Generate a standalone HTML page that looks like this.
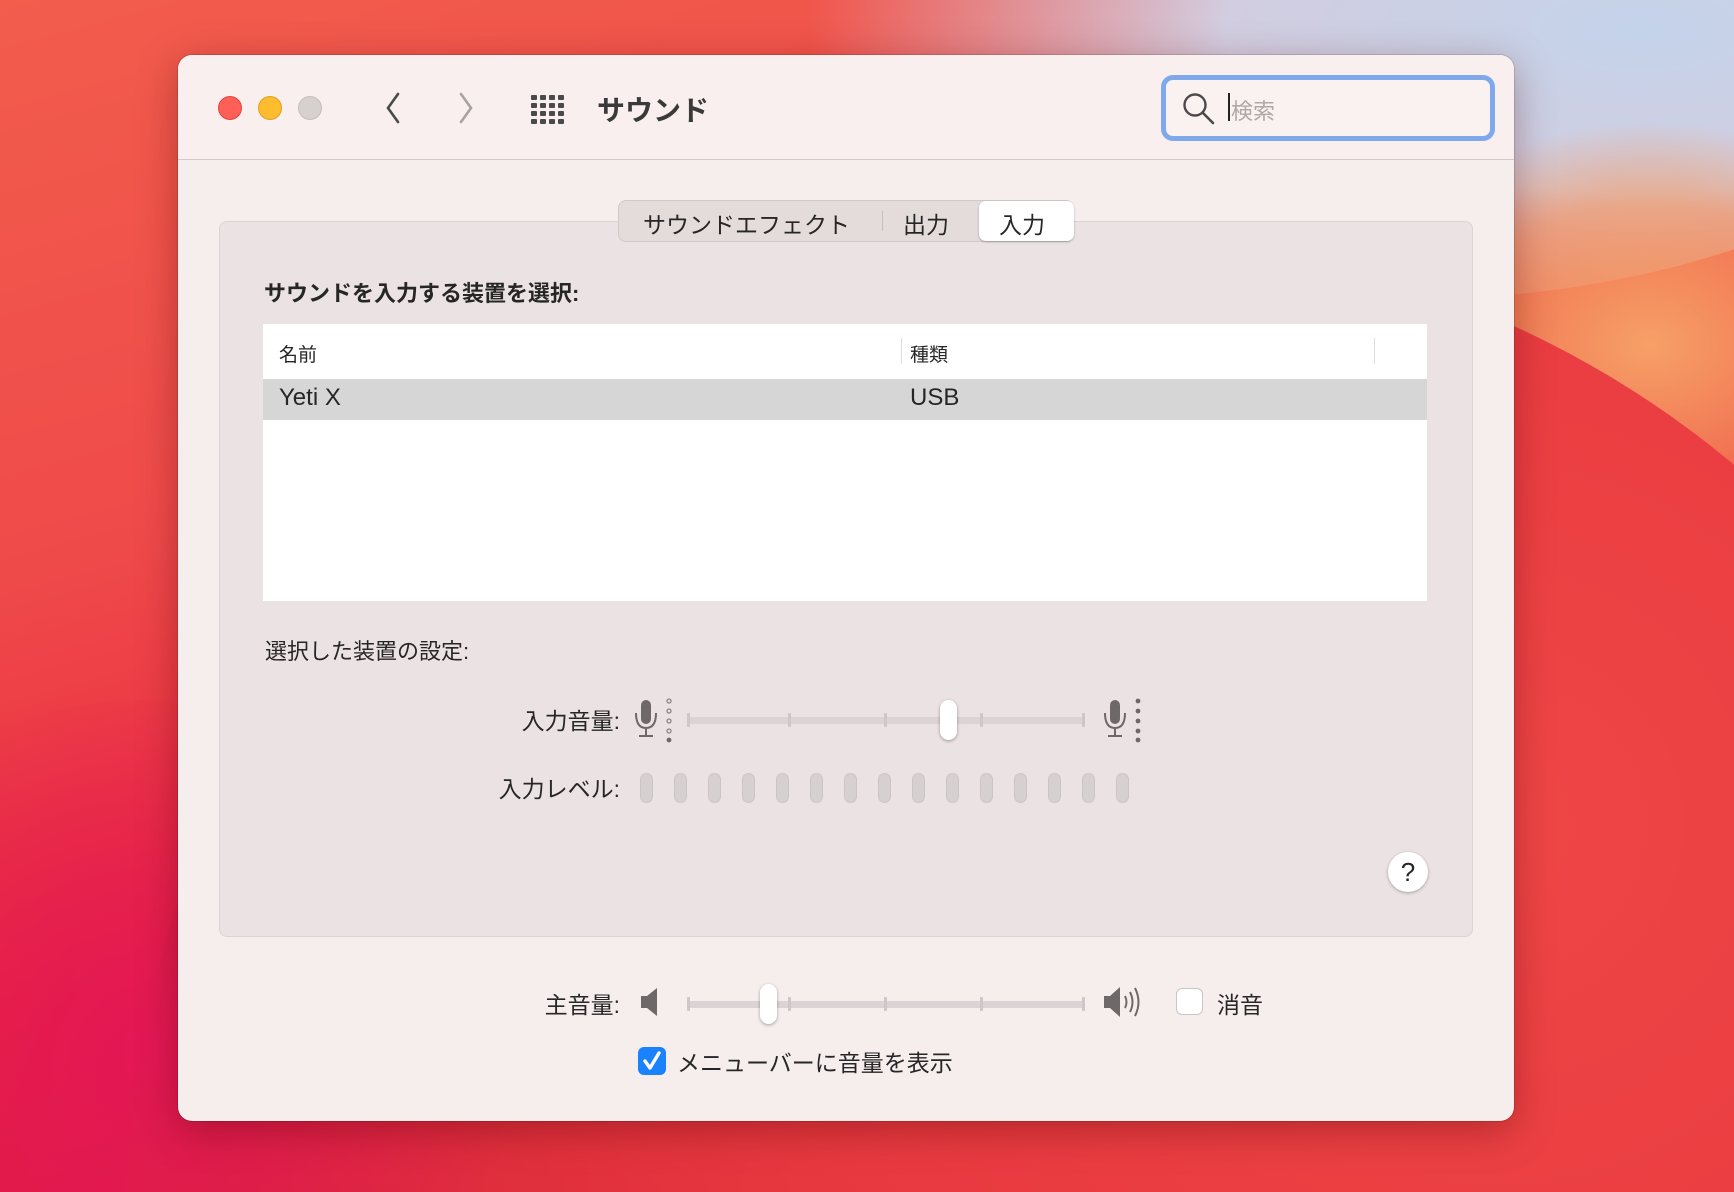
<!DOCTYPE html>
<html><head><meta charset="utf-8">
<style>
*{margin:0;padding:0;box-sizing:border-box}
html,body{width:1734px;height:1192px;overflow:hidden;background:#e8303f}
body{position:relative;font-family:"Liberation Sans","Noto Sans CJK JP",sans-serif;color:#262626}
.wall{position:absolute;left:0;top:0;width:1734px;height:1192px;overflow:hidden;
background:linear-gradient(165deg,#f25d4c 0%,#ef4a4a 35%,#e8243e 62%,#d7124a 85%,#c0183a 100%)}
.sky{position:absolute;left:800px;top:-300px;width:1200px;height:600px;border-radius:50%;background:radial-gradient(ellipse at 70% 55%,#c4d3ea 0%,#d2cde0 35%,rgba(235,170,170,0) 70%)}
.peach{position:absolute;left:1350px;top:120px;width:600px;height:450px;border-radius:50%;background:radial-gradient(ellipse,#f6a067 0%,rgba(245,150,90,0.6) 45%,rgba(245,150,90,0) 70%)}
.wave{position:absolute;left:126px;top:237px;width:1960px;height:1960px;border-radius:50%;background:radial-gradient(circle at 70% 30%,#ef4646 0%,#e7383f 40%,#d8253a 70%)}
.pink{position:absolute;left:-250px;top:700px;width:800px;height:700px;border-radius:50%;background:radial-gradient(circle,#e31755 0%,rgba(220,20,80,0) 70%)}
.win{position:absolute;left:178px;top:55px;width:1336px;height:1066px;background:#f6eeed;border-radius:14px;box-shadow:0 10px 40px rgba(80,0,0,.35),0 0 0 1px rgba(0,0,0,.12);overflow:hidden}
.tb{position:absolute;left:0;top:0;width:100%;height:105px;border-bottom:1px solid #d4c9c8;background:#f8efee}
.tl{position:absolute;top:41px;width:24px;height:24px;border-radius:50%}
.abs{position:absolute}
.panel{position:absolute;left:41px;top:166px;width:1254px;height:716px;background:#ebe3e3;border:1px solid #ddd3d3;border-radius:8px}
.seg{position:absolute;left:440px;top:145px;width:456px;height:42px;background:#e4dbdb;border:1px solid #d2c8c8;border-radius:8px;font-size:23px}
.seg span{position:absolute;top:5px}
.sel{position:absolute;left:360px;top:0px;width:95px;height:40px;background:#fff;border-radius:7px;box-shadow:0 1px 2px rgba(0,0,0,.25)}
.table{position:absolute;left:85px;top:269px;width:1164px;height:277px;background:#fff}
.lbl{position:absolute;font-size:23px;text-align:right}
.track{position:absolute;height:7px;background:#dcd4d4;border-radius:4px}
.tick{position:absolute;width:3px;height:14px;background:#cfc7c7;border-radius:1px}
.thumb{position:absolute;width:17px;height:40px;background:#fff;border-radius:9px;box-shadow:0 1px 3px rgba(0,0,0,.35)}
.bar{position:absolute;width:13px;height:30px;background:#d7d0d0;border:1px solid #cdc5c5;border-radius:7px}
</style></head><body>
<div class="wall"><div class="sky"></div><div class="peach"></div><div class="wave"></div><div class="pink"></div></div>
<div class="win">
 <div class="tb">
  <div class="tl" style="left:40px;background:#fe5f57;border:1px solid #e0443e"></div>
  <div class="tl" style="left:80px;background:#febc2e;border:1px solid #dea123"></div>
  <div class="tl" style="left:120px;background:#d6d0cf;border:1px solid #c4bdbc"></div>
  <svg class="abs" style="left:205px;top:36px" width="20" height="34"><path d="M15 3 L5 17 L15 31" fill="none" stroke="#4a4a4a" stroke-width="2.6" stroke-linecap="round"/></svg>
  <svg class="abs" style="left:278px;top:36px" width="20" height="34"><path d="M5 3 L15 17 L5 31" fill="none" stroke="#a8a2a2" stroke-width="2.6" stroke-linecap="round"/></svg>
  <svg class="abs" style="left:352px;top:39px" width="38" height="30"><g fill="#4a4a4a">
   <rect x="1" y="1" width="6" height="5" rx="1"/><rect x="10" y="1" width="6" height="5" rx="1"/><rect x="19" y="1" width="6" height="5" rx="1"/><rect x="28" y="1" width="6" height="5" rx="1"/>
   <rect x="1" y="9" width="6" height="5" rx="1"/><rect x="10" y="9" width="6" height="5" rx="1"/><rect x="19" y="9" width="6" height="5" rx="1"/><rect x="28" y="9" width="6" height="5" rx="1"/>
   <rect x="1" y="17" width="6" height="5" rx="1"/><rect x="10" y="17" width="6" height="5" rx="1"/><rect x="19" y="17" width="6" height="5" rx="1"/><rect x="28" y="17" width="6" height="5" rx="1"/>
   <rect x="1" y="25" width="6" height="5" rx="1"/><rect x="10" y="25" width="6" height="5" rx="1"/><rect x="19" y="25" width="6" height="5" rx="1"/><rect x="28" y="25" width="6" height="5" rx="1"/></g></svg>
  <div class="abs" style="left:419px;top:34px;font-size:28px;font-weight:bold;color:#3a3a3a">サウンド</div>
  <div class="abs" style="left:983px;top:20px;width:334px;height:66px;border:5px solid #7fa9ea;border-radius:12px;background:#f9f2f1"></div>
  <svg class="abs" style="left:1004px;top:37px" width="34" height="34"><circle cx="13" cy="13" r="10.5" fill="none" stroke="#4a4a4a" stroke-width="2.4"/><path d="M21 21 L31 31" stroke="#4a4a4a" stroke-width="2.6" stroke-linecap="round"/></svg>
  <div class="abs" style="left:1050px;top:38px;width:2px;height:28px;background:#222"></div>
  <div class="abs" style="left:1053px;top:39px;font-size:22px;color:#b0a8a8">検索</div>
 </div>
 <div class="panel"></div>
 <div class="seg">
  <span style="left:24px">サウンドエフェクト</span>
  <div class="abs" style="left:263px;top:10px;width:1px;height:20px;background:#c8bebe"></div>
  <span style="left:284px">出力</span>
  <div class="sel"></div>
  <span style="left:380px">入力</span>
 </div>
 <div class="abs" style="left:86px;top:221px;font-size:22px;font-weight:bold">サウンドを入力する装置を選択:</div>
 <div class="table">
  <div class="abs" style="left:16px;top:16px;font-size:19px">名前</div>
  <div class="abs" style="left:638px;top:14px;width:1px;height:26px;background:#ddd"></div>
  <div class="abs" style="left:647px;top:16px;font-size:19px">種類</div>
  <div class="abs" style="left:1111px;top:14px;width:1px;height:26px;background:#ddd"></div>
  <div class="abs" style="left:0;top:55px;width:1164px;height:41px;background:#d6d6d6"></div>
  <div class="abs" style="left:16px;top:60px;font-size:24px">Yeti X</div>
  <div class="abs" style="left:647px;top:60px;font-size:24px">USB</div>
 </div>
 <div class="abs" style="left:87px;top:579px;font-size:22px">選択した装置の設定:</div>
 <div class="abs" style="left:1210px;top:797px;width:40px;height:40px;border-radius:50%;background:#fff;box-shadow:0 1px 3px rgba(0,0,0,.3);font-size:26px;text-align:center;line-height:40px">?</div>
 <div class="lbl" style="left:280px;width:162px;top:647px">入力音量:</div>
 <svg class="abs" style="left:455px;top:643px" width="40" height="45"><rect x="8" y="2" width="10" height="24" rx="5" fill="#6e6868"/><path d="M3 15 Q3 30 13 30 Q23 30 23 15" fill="none" stroke="#6e6868" stroke-width="2"/><path d="M13 30 V37 M6 38 H20" stroke="#6e6868" stroke-width="2"/><g fill="none" stroke="#8a8484" stroke-width="1.3"><circle cx="36" cy="3" r="2"/><circle cx="36" cy="13" r="2"/><circle cx="36" cy="23" r="2"/><circle cx="36" cy="33" r="2"/></g><circle cx="36" cy="42" r="2.4" fill="#6e6868"/></svg>
 <div class="track" style="left:509px;top:662px;width:398px"></div>
 <div class="tick" style="left:509px;top:658px"></div><div class="tick" style="left:610px;top:658px"></div><div class="tick" style="left:706px;top:658px"></div><div class="tick" style="left:802px;top:658px"></div><div class="tick" style="left:904px;top:658px"></div>
 <div class="thumb" style="left:762px;top:645px"></div>
 <svg class="abs" style="left:924px;top:643px" width="40" height="45"><rect x="8" y="2" width="10" height="24" rx="5" fill="#6e6868"/><path d="M3 15 Q3 30 13 30 Q23 30 23 15" fill="none" stroke="#6e6868" stroke-width="2"/><path d="M13 30 V37 M6 38 H20" stroke="#6e6868" stroke-width="2"/><g fill="#6e6868"><circle cx="36" cy="3" r="2.4"/><circle cx="36" cy="13" r="2.4"/><circle cx="36" cy="23" r="2.4"/><circle cx="36" cy="33" r="2.4"/><circle cx="36" cy="42" r="2.4"/></g></svg>
 <div class="lbl" style="left:250px;width:192px;top:715px">入力レベル:</div>
 <div class="bar" style="left:462px;top:718px"></div><div class="bar" style="left:496px;top:718px"></div><div class="bar" style="left:530px;top:718px"></div><div class="bar" style="left:564px;top:718px"></div><div class="bar" style="left:598px;top:718px"></div><div class="bar" style="left:632px;top:718px"></div><div class="bar" style="left:666px;top:718px"></div><div class="bar" style="left:700px;top:718px"></div><div class="bar" style="left:734px;top:718px"></div><div class="bar" style="left:768px;top:718px"></div><div class="bar" style="left:802px;top:718px"></div><div class="bar" style="left:836px;top:718px"></div><div class="bar" style="left:870px;top:718px"></div><div class="bar" style="left:904px;top:718px"></div><div class="bar" style="left:938px;top:718px"></div>
 <div class="lbl" style="left:280px;width:162px;top:931px">主音量:</div>
 <svg class="abs" style="left:462px;top:931px" width="24" height="32"><path d="M1 10 H7 L17 2 V30 L7 22 H1 Z" fill="#6e6868"/></svg>
 <div class="track" style="left:509px;top:946px;width:398px"></div>
 <div class="tick" style="left:509px;top:942px"></div><div class="tick" style="left:610px;top:942px"></div><div class="tick" style="left:706px;top:942px"></div><div class="tick" style="left:802px;top:942px"></div><div class="tick" style="left:904px;top:942px"></div>
 <div class="thumb" style="left:582px;top:929px"></div>
 <svg class="abs" style="left:925px;top:929px" width="46" height="36"><path d="M1 12 H7 L17 3 V33 L7 24 H1 Z" fill="#6e6868"/><g fill="none" stroke="#6e6868" stroke-width="2"><path d="M22 12 Q25 18 22 24"/><path d="M27 8 Q32 18 27 28"/><path d="M32 4 Q39 18 32 32"/></g></svg>
 <div class="abs" style="left:998px;top:933px;width:27px;height:27px;background:#fff;border:1px solid #cdc5c5;border-radius:6px"></div>
 <div class="abs" style="left:1039px;top:931px;font-size:23px">消音</div>
 <div class="abs" style="left:460px;top:992px;width:28px;height:28px;background:#1a82fb;border-radius:6px"></div>
 <svg class="abs" style="left:460px;top:992px" width="28" height="28"><path d="M7 14 L12 21 L21 6" fill="none" stroke="#fff" stroke-width="3.4" stroke-linecap="round" stroke-linejoin="round"/></svg>
 <div class="abs" style="left:499px;top:989px;font-size:23px">メニューバーに音量を表示</div>
</div>
</body></html>
